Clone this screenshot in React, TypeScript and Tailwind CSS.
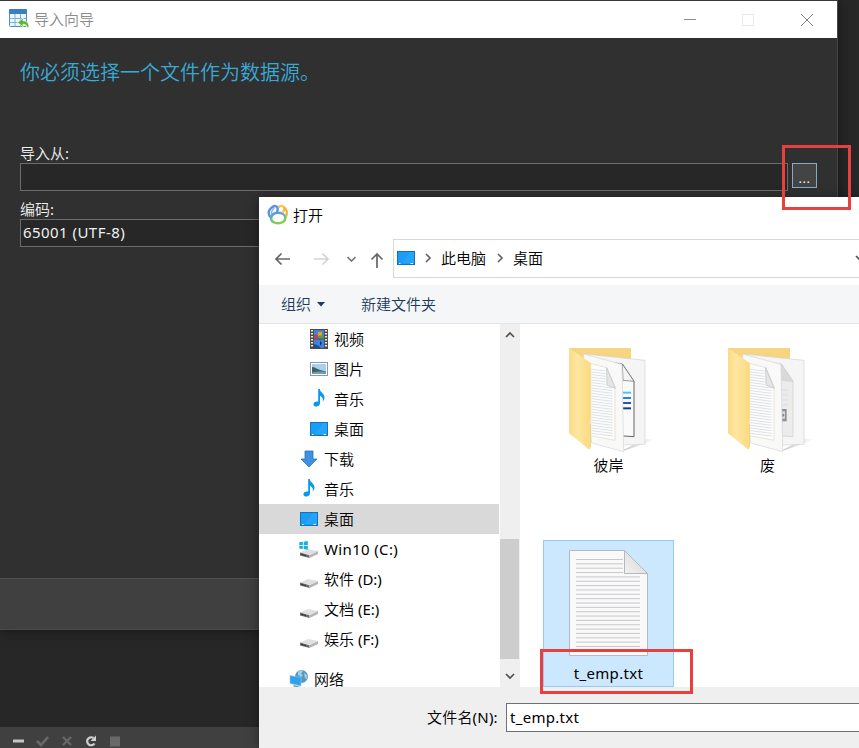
import React from "react";

const UI_FONT = "font-['Noto_Sans','Noto_Sans_CJK_SC_DemiLight','Noto_Sans_CJK_SC',sans-serif]";

function WizardIcon() {
  return (
    <svg width="22" height="22" viewBox="0 0 22 22" className="-mt-0.5 shrink-0">
      <rect x="1.5" y="1.5" width="17" height="17" rx="1" fill="#eef6fc" stroke="#4a8cc2" />
      <path d="M1 2a1 1 0 0 1 1-1h16a1 1 0 0 1 1 1v4H1z" fill="#3a80bc" />
      <path d="M1.500 10.500h17M1.500 14.500h17M7 6v12.500M12.500 6v12.500" stroke="#74b4dd" fill="none" />
      <path d="M9.500 14.500l5.500-4.500v2.800c4 0 6 2.500 6 6.700h-2.200c0-2.300-1.300-3.300-3.800-3.300V19z" fill="#5fb52c" stroke="#fff" strokeWidth=".7" />
    </svg>
  );
}

function NavicatIcon() {
  return (
    <svg width="22" height="22" viewBox="0 0 22 22" fill="none" strokeWidth="2.400" className="shrink-0">
      <path d="M4.200 14C1 11 1.300 7.500 3 5.300 4.800 3 7.500 1.500 9.300 2.300c2 .8 1.700 3.500.5 5.700" stroke="#5f8fe6" />
      <path d="M4.500 10.500C4.200 8 5.500 5.500 7.500 4" stroke="#8db0f2" strokeWidth="1.500" />
      <path d="M11.500 3.500C13 1.200 15.500 1.600 17 3.300c1.300 1.500.2 3.700-1.500 4.700" stroke="#f7c34e" />
      <path d="M17 3.500c3.200 2.500 3.800 6.500 1.300 10" stroke="#f0b040" />
      <path d="M4.200 14C4.800 10.500 7.500 8.800 11 8.800s7 1.700 7.300 4.700c.3 3.700-3.300 5.800-7.300 5.800S3.600 17 4.200 14z" stroke="url(#nv)" />
      <defs>
        <linearGradient id="nv" x1="8" y1="8" x2="11" y2="19" gradientUnits="userSpaceOnUse">
          <stop stopColor="#5a91e8" />
          <stop offset=".5" stopColor="#64bda0" />
          <stop offset="1" stopColor="#84cf4b" />
        </linearGradient>
      </defs>
    </svg>
  );
}

function DesktopIcon() {
  return (
    <svg width="18" height="14" viewBox="0 0 18 14" className="shrink-0">
      <rect x=".5" y=".5" width="17" height="13" fill="#1a9df5" stroke="#1273b8" />
      <path d="M5 12L13 1h4v11z" fill="#26a5f8" />
      <path d="M2 12.500h1.500M13.500 12.500h2.500" stroke="#d9effc" />
    </svg>
  );
}

function VideoIcon() {
  return (
    <svg width="18" height="20" viewBox="0 0 18 20" className="shrink-0">
      <rect width="18" height="20" fill="#4a4a4a" />
      <path d="M2 1v18M16 1v18" stroke="#e8e8e8" strokeWidth="2.200" strokeDasharray="1.500 1.500" />
      <rect x="4" y="1" width="10" height="8.500" fill="#4a82c4" />
      <rect x="4" y="10.500" width="10" height="8.500" fill="#3f82dd" />
      <path d="M4 6h4v3.500H4z" fill="#c8404b" />
      <path d="M8 3h4v4H8z" fill="#d8a53b" />
      <path d="M9 6.500h5v3H9z" fill="#5c9b3f" />
      <path d="M4 15l4 1.500L11 19H4z" fill="#1d4d94" />
      <path d="M10 12l2 2-2 3z" fill="#253041" />
    </svg>
  );
}

function PictureIcon() {
  return (
    <svg width="18" height="14" viewBox="0 0 18 14" className="shrink-0">
      <rect x=".5" y=".5" width="17" height="13" fill="#fff" stroke="#8c98a4" />
      <rect x="2" y="2" width="14" height="10" fill="#a8cff1" />
      <path d="M2 5c3 0 5 2 8 3l6 1.500V12H2z" fill="#3c6461" />
      <path d="M2 10.500c5-1 9-1 14-.8V12H2z" fill="#6d9fb7" />
    </svg>
  );
}

function MusicIcon() {
  return (
    <svg width="12" height="18" viewBox="0 0 12 18" className="-mt-0.5 shrink-0">
      <path d="M5.200 0h1.600c.3 3.300 4.700 4.600 4.700 8.300 0 2-.8 3.200-1.800 4.200.6-2.500.2-4.300-2.700-5.700V14c0 2-1.500 3.500-3.600 3.500C1.700 17.500.4 16.600.4 15.200c0-1.600 1.600-2.800 3.400-2.800.5 0 1 .1 1.400.3z" fill="#0a98e8" />
    </svg>
  );
}

function DownloadIcon() {
  return (
    <svg width="18" height="18" viewBox="0 0 18 18" className="shrink-0">
      <path d="M5 1h8v8h4l-8 8-8-8h4z" fill="#3d92e0" stroke="#2c70b5" strokeWidth=".8" />
    </svg>
  );
}

function DriveIcon({ win = false }: { win?: boolean }) {
  return (
    <svg width="20" height="20" viewBox="0 0 20 20" className="shrink-0">
      <path d="M1 13.500L9 10l10 2-8.500 4z" fill="#e0e0e0" />
      <path d="M1 13.500l9.500 2.700V19L1 16.500z" fill="#6c6c6c" />
      <path d="M10.500 16.200L19 12v3l-8.500 4z" fill="#b4b4b4" />
      <path d="M2 14.800l5 1.500v1L2 15.800z" fill="#333" />
      {win && <path d="M.3 3.300L3.800 2.800V6H.3zM4.700 2.700L8.800 2v4H4.700zM.3 6.800h3.500V10L.3 9.500zM4.700 6.800h4.100v4l-4.100-.7z" fill="#15b0d6" />}
    </svg>
  );
}

function NetworkIcon() {
  return (
    <svg width="20" height="19" viewBox="0 0 20 19" className="-mt-0.5 shrink-0">
      <circle cx="12.500" cy="7.500" r="6.500" fill="#5598c5" />
      <path d="M9 3c2-2 4-2 5-1l-2 3 2 1-2 2-3-2zM15 4l3 2v4l-2-1z" fill="#a3cfe4" />
      <path d="M1 6.500l11 2V17L1 14.500z" fill="#2fa1ed" stroke="#8fcaf0" strokeWidth=".6" />
      <path d="M5 16l6 1.800-3 .7-4-1.200z" fill="#7698ad" />
    </svg>
  );
}

function FolderIcon({ id, gray = false }: { id: string; gray?: boolean }) {
  return (
    <svg width="100" height="114" viewBox="-3 0 300 342" className="shrink-0">
      <defs>
        <linearGradient id={id} x1="0" x2="1">
          <stop stopColor="#fbdc85" />
          <stop offset=".4" stopColor="#ffe7a2" />
          <stop offset="1" stopColor="#f9da7c" />
        </linearGradient>
        <linearGradient id={id + "s"} x1="0" x2="1">
          <stop stopColor="#c9c9c9" />
          <stop offset="1" stopColor="#fff" />
        </linearGradient>
      </defs>
      <path d="M190 330L255 296l30 2-35 14-58 20z" fill={`url(#${id}s)`} />
      <path d="M27 24h186v80H27z" fill="#f5d580" />
      <path d="M75 42L255 61v252l-65 2z" fill="#f5f5f5" stroke="#d2d2d2" strokeWidth="2" />
      <path d="M120 62l67 10 35 52v166l-60-4z" fill={gray ? "#ececec" : "#fafafa"} stroke={gray ? "#dcd8d0" : "#666"} strokeWidth="3" />
      <path d="M187 72l2 49 33 3z" fill={gray ? "#dadada" : "#f4f4f4"} stroke={gray ? "#ccc" : "#666"} strokeWidth="2" />
      {gray ? (
        <g>
          <path d="M188 150h20M188 165h20M188 180h20M188 195h20" stroke="#ddd" strokeWidth="3" />
          <path d="M180 207h23v37h-23z" fill="#8d9095" />
          <path d="M187 214h11v22h-11z" fill="#d9dadd" />
          <path d="M190 220l7 6-7 6z" fill="#74777c" />
        </g>
      ) : (
        <g strokeWidth="6">
          <path d="M188 158h25" stroke="#4fc3f5" />
          <path d="M188 174h25" stroke="#2586d0" />
          <path d="M188 189h25" stroke="#2158b8" />
          <path d="M188 205h25" stroke="#173b97" />
        </g>
      )}
      <path d="M70 42l116 31 5 262-96-26z" fill="#f9f9f9" stroke="#d4d4d4" strokeWidth="2" />
      <path d="M92 70l48 13 25 58v160l-73-14z" fill="#fdfdfd" stroke="#e2d8bf" strokeWidth="2" />
      {Array.from({ length: 25 }, (_, i) => (
        <path key={i} d={`M94 ${88 + i * 8}L${i < 6 ? 137 : 158} ${i < 6 ? 93 + i * 8 : 96 + i * 8}`} stroke="#cdd1d6" strokeWidth="2" />
      ))}
      <path d="M140 83l1 52 25 10z" fill="#e6e6e6" stroke="#bbb" strokeWidth="2" />
      <path d="M27 24l65 45v165l-4 20v75l-61-49z" fill={`url(#${id})`} />
      <path d="M88 254v75l5-10v-70z" fill="#f3d37c" />
    </svg>
  );
}

function TextFileIcon() {
  return (
    <svg width="79" height="107" viewBox="0 0 79 107" className="shrink-0">
      <defs>
        <linearGradient id="fold" x1="0" y1="1" x2="1" y2="0">
          <stop stopColor="#f2f2f2" />
          <stop offset="1" stopColor="#d4d4d4" />
        </linearGradient>
      </defs>
      <path d="M.5.5h55l23 23v82H.5z" fill="#f9f9f9" stroke="#b4bcc2" />
      {Array.from({ length: 21 }, (_, i) => {
        const y = 9.5 + i * 4.35;
        return <path key={i} d={`M7 ${y}H${i < 4 ? 54 : 71}`} stroke="#c8c8cc" />;
      })}
      <path d="M55.500.5v23h23z" fill="url(#fold)" stroke="#b7b7b7" />
    </svg>
  );
}

function Chevron({ dir, className = "" }: { dir: "r" | "d" | "u"; className?: string }) {
  const d = dir === "r" ? "M4 2l4 4-4 4" : dir === "d" ? "M2 4l4 4 4-4" : "M2 8l4-4 4 4";
  return (
    <svg width="12" height="12" viewBox="0 0 12 12" fill="none" stroke="currentColor" strokeWidth="1.700" className={"shrink-0 " + className}>
      <path d={d} />
    </svg>
  );
}

const tree = [
  { label: "视频", pad: "pl-[50px]", icon: <VideoIcon /> },
  { label: "图片", pad: "pl-[50px]", icon: <PictureIcon /> },
  { label: "音乐", pad: "pl-[50px]", icon: <MusicIcon /> },
  { label: "桌面", pad: "pl-[50px]", icon: <DesktopIcon /> },
  { label: "下载", pad: "pl-[40px]", icon: <DownloadIcon /> },
  { label: "音乐", pad: "pl-[40px]", icon: <MusicIcon /> },
  { label: "桌面", pad: "pl-[40px]", icon: <DesktopIcon />, selected: true },
  { label: "Win10 (C:)", pad: "pl-[40px]", icon: <DriveIcon win />, tracking: "tracking-[0.35px]" },
  { label: "软件 (D:)", pad: "pl-[40px]", icon: <DriveIcon /> },
  { label: "文档 (E:)", pad: "pl-[40px]", icon: <DriveIcon /> },
  { label: "娱乐 (F:)", pad: "pl-[40px]", icon: <DriveIcon /> },
];

type RowProps = { label: string; pad: string; icon: React.ReactNode; selected?: boolean; tracking?: string };

function TreeRow({ label, pad, icon, selected, tracking = "" }: RowProps) {
  return (
    <div className={`flex h-[30px] shrink-0 items-center ${pad} ${selected ? "bg-[#d9d9d9]" : ""}`}>
      <div className="flex w-5 shrink-0 justify-center">{icon}</div>
      <span className={`ml-[5px] leading-[18px] ${tracking}`}>{label}</span>
    </div>
  );
}

function ImportWizard() {
  return (
    <div className="absolute top-0 left-0 flex h-[630px] w-[838px] flex-col border-t border-r border-t-[#3a3838] border-r-[#454545] bg-[#303030] text-[15px] text-[#f0f0f0] shadow-[0_0_12px_rgba(0,0,0,0.5)]">
      <div className="flex h-[37px] shrink-0 items-center bg-white pl-2 text-[#8c8c8c]">
        <WizardIcon />
        <span className="ml-1 font-light">导入向导</span>
        <svg width="132" height="14" viewBox="0 0 132 14" fill="none" className="mr-[22px] ml-auto">
          <path d="M1 6.500h12" stroke="#8d8d8d" />
          <rect x="59.500" y="1.500" width="11" height="11" stroke="#e8e8e8" />
          <path d="M118 1l12 12M130 1l-12 12" stroke="#808080" />
        </svg>
      </div>
      <div className="flex h-[540px] shrink-0 flex-col pl-5">
        <div className="mt-[20px] h-[30px] text-[20px] leading-[30px] text-[#3ba9d5]">你必须选择一个文件作为数据源。</div>
        <div className="mt-[56px] h-[19px] leading-[19px]">导入从:</div>
        <div className="flex gap-1">
          <div className="h-[28px] w-[768px] border border-[#6c6c6c] bg-[#272727]" />
          <div className="h-[25px] w-[25px] border border-[#84acc8] bg-[#444] text-center text-[13px] leading-[28px] tracking-[0.5px]">...</div>
        </div>
        <div className="mt-[9px] h-[19px] leading-[19px]">编码:</div>
        <div className="h-[28px] w-[768px] border border-[#6c6c6c] bg-[#272727] pl-0.5 leading-[24px] tracking-[0.45px]">65001 (UTF-8)</div>
      </div>
      <div className="grow border-t border-b border-t-[#505050] border-b-[#4a4a4a] bg-[#404040]" />
    </div>
  );
}

function OpenDialog() {
  return (
    <div className="absolute top-[197px] left-[259px] flex h-[551px] w-[600px] flex-col overflow-hidden bg-white text-[15px] text-black shadow-[0_2px_12px_rgba(0,0,0,0.4)]">
      <div className="flex h-[42px] shrink-0 items-start pt-[7px] pl-2">
        <NavicatIcon />
        <span className="ml-1 leading-[22px]">打开</span>
      </div>
      <div className="flex h-[39px] shrink-0 items-center">
        <svg width="134" height="20" viewBox="0 0 134 20" fill="none" strokeWidth="1.700" className="shrink-0">
          <path d="M17 10h14M22.500 4.500L17 10l5.500 5.500" stroke="#666" />
          <path d="M55 10h14M63.500 4.500L69 10l-5.500 5.500" stroke="#d2d2d2" />
          <path d="M88.500 8l4 4 4-4" stroke="#777" />
          <path d="M118 19V5M112.500 10.500L118 5l5.500 5.500" stroke="#666" />
        </svg>
        <div className="flex h-[39px] grow items-center border border-r-0 border-[#d5d9de] pb-px pl-[3px]">
          <DesktopIcon />
          <Chevron dir="r" className="ml-[7px] text-[#666]" />
          <span className="ml-[7px]">此电脑</span>
          <Chevron dir="r" className="ml-[8px] text-[#666]" />
          <span className="ml-[7px]">桌面</span>
          <Chevron dir="d" className="-mr-[7px] ml-auto text-[#555]" />
        </div>
      </div>
      <div className="mt-[7px] flex h-[39px] shrink-0 items-center border-b border-[#e2e5e8] bg-[#f4f6f8] pl-[22px] text-[#1e395b]">
        <span>组织</span>
        <svg width="8" height="5" viewBox="0 0 8 5" className="ml-[6px]">
          <path d="M0 0h8L4 4.500z" fill="#1e395b" />
        </svg>
        <span className="ml-[36px]">新建文件夹</span>
      </div>
      <div className="flex h-[363px] shrink-0">
        <div className="mr-px flex w-[240px] shrink-0 flex-col">
          {tree.map((t, i) => (
            <TreeRow key={i} {...t} />
          ))}
          <div className="mt-[10px] flex h-[23px] flex-col">
            <TreeRow label="网络" pad="pl-[30px]" icon={<NetworkIcon />} />
          </div>
        </div>
        <div className="flex w-5 shrink-0 flex-col items-center bg-[#efefef] text-[#505050]">
          <div className="mr-px flex h-[215px] items-start pt-[5px]">
            <Chevron dir="u" />
          </div>
          <div className="mr-px h-[120px] w-[19px] bg-[#cdcdcd]" />
          <Chevron dir="d" className="mt-[11px] mr-px" />
        </div>
        <div className="flex flex-col pl-[23px]">
          <div className="flex h-[216px] gap-[28px] pt-4">
            <div className="flex w-[131px] flex-col items-center">
              <FolderIcon id="fa" />
              <span className="leading-[22px]">彼岸</span>
            </div>
            <div className="flex w-[131px] flex-col items-center">
              <FolderIcon id="fb" gray />
              <span className="leading-[22px]">废</span>
            </div>
          </div>
          <div className="flex h-[147px] w-[131px] flex-col items-center border border-[#99c9ee] bg-[#cce8ff] pt-[9px]">
            <TextFileIcon />
            <span className="mt-[5px] leading-[22px] tracking-[0.3px]">t_emp.txt</span>
          </div>
        </div>
      </div>
      <div className="flex grow items-start bg-[#efefef] pt-4 pl-[168px]">
        <span className="w-[79px] leading-[29px] tracking-[0.2px] whitespace-nowrap">文件名(N):</span>
        <div className="h-[29px] grow border border-r-0 border-[#6f7175] bg-white pl-[3px] leading-[27px] tracking-[0.3px]">t_emp.txt</div>
      </div>
    </div>
  );
}

export default function App() {
  return (
    <div className={`relative flex h-[748px] w-[859px] flex-col justify-end overflow-hidden bg-[#272727] ${UI_FONT}`}>
      <div className="flex h-[21px] items-center bg-[#404040] pt-[6px] pl-3">
        <svg width="110" height="14" viewBox="0 0 110 14" fill="none">
          <path d="M1 7h11" stroke="#c4c4c4" strokeWidth="3" />
          <path d="M25 7l4 4 7-8" stroke="#686868" strokeWidth="2.600" />
          <path d="M51 3l8 8M59 3l-8 8" stroke="#686868" strokeWidth="2.400" />
          <path d="M81.500 4A4 4 0 1 0 82.500 9.500" stroke="#d0d0d0" strokeWidth="2.200" />
          <path d="M84 1.500v5.500h-5.500z" fill="#d0d0d0" />
          <path d="M98 2.500h10v10H98z" fill="#686868" />
        </svg>
      </div>
      <ImportWizard />
      <OpenDialog />
      <div className="absolute top-[145px] left-[782px] h-[65px] w-[69px] border-3 border-[#e8403f]" />
      <div className="absolute top-[649px] left-[540px] h-[45px] w-[153px] border-3 border-[#e8403f]" />
    </div>
  );
}
